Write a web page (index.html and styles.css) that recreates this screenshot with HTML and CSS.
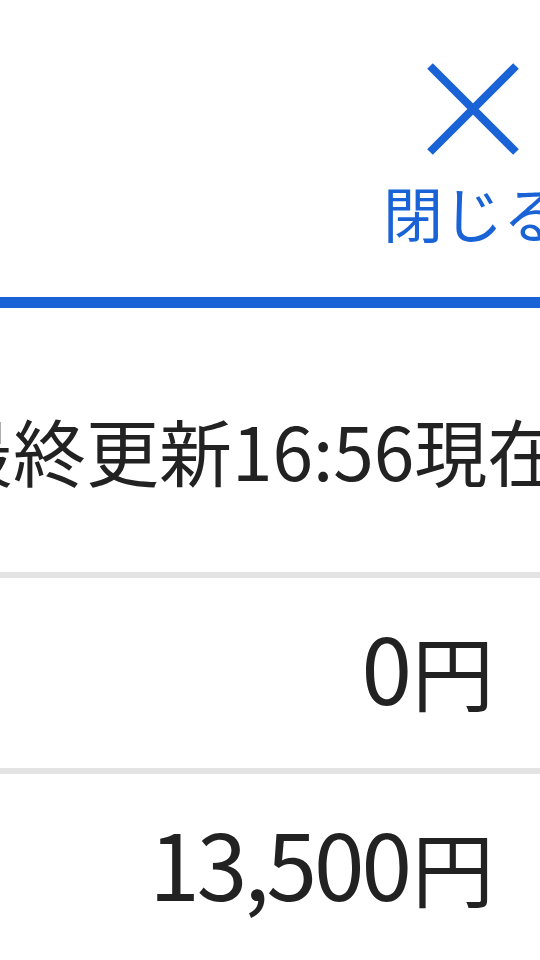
FILE: index.html
```html
<!DOCTYPE html>
<html lang="ja">
<head>
<meta charset="utf-8">
<link rel="stylesheet" href="styles.css">
</head>
<body>
<div class="page">
  <header class="header">
    <div class="close">
      <svg class="close-icon" width="94" height="94" viewBox="0 0 94 94" aria-hidden="true">
        <path d="M4 4 L90 90 M90 4 L4 90" stroke="#1a63d7" stroke-width="8" stroke-linecap="butt" fill="none"/>
      </svg>
      <span class="close-label">閉じる</span>
    </div>
  </header>
  <div class="updated"><span class="updated-text">最終更新16:56現在</span></div>
  <div class="row"><span class="amount">0<span class="yen">円</span></span></div>
  <div class="row"><span class="amount">13,500<span class="yen">円</span></span></div>
</div>
</body>
</html>
```
FILE: styles.css
```css
html, body {
  margin: 0;
  padding: 0;
  background: #fff;
}
body {
  width: 540px;
  height: 960px;
  overflow: hidden;
  font-family: "Noto Sans CJK JP", "Noto Sans", sans-serif;
  color: #222;
}
.page {
  display: flex;
  flex-direction: column;
}
.header {
  height: 297px;
  border-bottom: 11px solid #1a63d7;
  display: flex;
  justify-content: flex-end;
}
.close {
  width: 94px;
  margin-right: 20px;
  padding-top: 62px;
  display: flex;
  flex-direction: column;
  align-items: center;
}
.close-icon {
  display: block;
  flex: none;
}
.close-label {
  margin-top: 20px;
  font-size: 60px;
  line-height: 1.2;
  white-space: nowrap;
  color: #1a63d7;
}
.updated {
  height: 264px;
  display: flex;
  align-items: center;
  padding-top: 18px;
  box-sizing: border-box;
  white-space: nowrap;
}
.updated-text {
  margin-left: -60px;
  font-size: 73px;
  line-height: 1;
  font-feature-settings: "palt" 1;
}
.row {
  height: 196px;
  border-top: 6px solid #e3e3e3;
  box-sizing: border-box;
  display: flex;
  align-items: center;
  justify-content: flex-end;
  padding-right: 46px;
  padding-bottom: 16px;
}
.amount {
  font-size: 91px;
  line-height: 1;
  letter-spacing: -3px;
  white-space: nowrap;
}
.yen {
  font-size: 82px;
  letter-spacing: 0;
  margin-left: 3px;
  font-feature-settings: "palt" 1;
}
```
